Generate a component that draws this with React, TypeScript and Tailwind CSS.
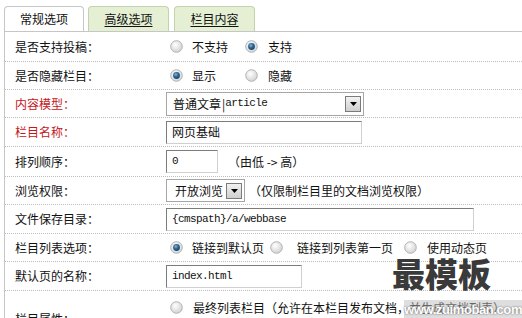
import React from 'react'

const cjk = { fontFamily: '"Noto Sans CJK SC", "Liberation Sans", sans-serif' }
const mono = { fontFamily: '"Liberation Mono", "Noto Sans CJK SC", monospace' }

function Radio({ checked = false }: { checked?: boolean }) {
  return (
    <svg width="13" height="13" viewBox="0 0 13 13" className="shrink-0">
      <defs>
        <radialGradient id={checked ? 'rc' : 'ru'} cx="0.4" cy="0.35" r="0.7">
          <stop offset="0" stopColor="#ffffff" />
          <stop offset="1" stopColor={checked ? '#c9d3db' : '#cfcfcf'} />
        </radialGradient>
        <radialGradient id="dot" cx="0.4" cy="0.35" r="0.7">
          <stop offset="0" stopColor="#8fb4d0" />
          <stop offset="0.5" stopColor="#2d6690" />
          <stop offset="1" stopColor="#173f5e" />
        </radialGradient>
      </defs>
      <circle cx="6.5" cy="6.5" r="5.8" fill={checked ? 'url(#rc)' : 'url(#ru)'} stroke="#b3b3b3" strokeWidth="1" />
      {checked && <circle cx="6.5" cy="6.5" r="3.4" fill="url(#dot)" />}
    </svg>
  )
}

function DropBtn() {
  return (
    <span className="w-[16px] h-[16px] border border-[#7b7b7b] bg-gradient-to-b from-[#f2f2f2] to-[#cfcfcf] flex items-center justify-center">
      <svg width="7" height="4" viewBox="0 0 7 4">
        <path d="M0 0 H7 L3.5 4 Z" fill="#000" />
      </svg>
    </span>
  )
}

function Row({ label, red, h, children }: { label: string, red?: boolean, h: string, children: React.ReactNode }) {
  return (
    <div className={`flex items-center border-b border-dotted border-[#bdbdbd] ${h}`}>
      <div className={`w-[161px] pl-[10px] text-[12px] ${red ? 'text-[#c4161c]' : 'text-[#111]'}`}>{label}</div>
      <div className="flex items-center text-[12px] text-[#111]">{children}</div>
    </div>
  )
}

const inputCls = 'h-[23px] border border-t-[#7c7c7c] border-l-[#7c7c7c] border-r-[#d0d0d0] border-b-[#d0d0d0] bg-white flex items-center pl-[5px]'

export default function App() {
  return (
    <div className="w-[522px] h-[318px] overflow-hidden bg-white relative" style={cjk}>
      {/* tabs */}
      <div className="flex items-end pl-[4px] pt-[7px] h-[31px]">
        <div className="w-[80px] h-[25px] border border-b-0 border-[#c6c6c6] rounded-t-[4px] bg-white flex items-center justify-center text-[12px] text-[#111]">常规选项</div>
        <div className="ml-[4px] w-[81px] h-[25px] border border-b-0 border-[#c3d3ad] rounded-t-[4px] bg-[#e4efd3] flex items-center justify-center text-[12px] text-[#111] underline underline-offset-2">高级选项</div>
        <div className="ml-[5px] w-[81px] h-[25px] border border-b-0 border-[#c3d3ad] rounded-t-[4px] bg-[#e4efd3] flex items-center justify-center text-[12px] text-[#111] underline underline-offset-2">栏目内容</div>
      </div>

      <div className="ml-[4px] border-l border-t border-[#c6c6c6]">
        <Row label="是否支持投稿：" h="h-[30px]">
          <span className="ml-[4px]"><Radio /></span>
          <span className="ml-[9px]">不支持</span>
          <span className="ml-[17px]"><Radio checked /></span>
          <span className="ml-[10px]">支持</span>
        </Row>
        <Row label="是否隐藏栏目：" h="h-[28px]">
          <span className="ml-[4px]"><Radio checked /></span>
          <span className="ml-[9px]">显示</span>
          <span className="ml-[29px]"><Radio /></span>
          <span className="ml-[10px]">隐藏</span>
        </Row>
        <Row label="内容模型：" red h="h-[28px]">
          <div className="w-[198px] h-[24px] border border-[#a6a6a6] flex items-center justify-between pl-[6px] pr-[2px]">
            <span className="flex items-center">
              普通文章<span className="ml-[1px]">|</span><span style={mono} className="text-[11px] tracking-[-0.6px]">article</span>
            </span>
            <DropBtn />
          </div>
        </Row>
        <Row label="栏目名称：" red h="h-[29px]">
          <div className={`${inputCls} w-[196px]`}>网页基础</div>
        </Row>
        <Row label="排列顺序：" h="h-[30px]">
          <div className={`${inputCls} w-[52px]`}>
            <span style={mono} className="text-[11px] tracking-[-0.6px]">0</span>
          </div>
          <span className="ml-[10px]">（由低 -&gt; 高）</span>
        </Row>
        <Row label="浏览权限：" h="h-[28px]">
          <div className="w-[79px] h-[23px] border border-[#a6a6a6] flex items-center justify-between pl-[8px] pr-[2px]">
            <span>开放浏览</span>
            <DropBtn />
          </div>
          <span className="ml-[4px]">（仅限制栏目里的文档浏览权限）</span>
        </Row>
        <Row label="文件保存目录：" h="h-[29px]">
          <div className={`${inputCls} w-[308px]`}>
            <span style={mono} className="text-[11px] tracking-[-0.6px]">{'{cmspath}/a/webbase'}</span>
          </div>
        </Row>
        <Row label="栏目列表选项：" h="h-[28px]">
          <span className="ml-[4px]"><Radio checked /></span>
          <span className="ml-[9px]">链接到默认页</span>
          <span className="ml-[6px]"><Radio /></span>
          <span className="ml-[14px]">链接到列表第一页</span>
          <span className="ml-[11px]"><Radio /></span>
          <span className="ml-[10px]">使用动态页</span>
        </Row>
        <Row label="默认页的名称：" h="h-[29px]">
          <div className={`${inputCls} w-[136px]`}>
            <span style={mono} className="text-[11px] tracking-[-0.6px]">index.html</span>
          </div>
        </Row>
        <div className="flex items-center h-[56px]">
          <div className="w-[161px] pl-[10px] text-[12px] text-[#111]">栏目属性：</div>
          <div className="flex flex-col gap-[5px] text-[12px] text-[#111]">
            <div className="flex items-center">
              <span className="ml-[4px]"><Radio /></span>
              <span className="ml-[10px]">最终列表栏目（允许在本栏目发布文档，并生成文档列表）</span>
            </div>
            <div className="flex items-center">
              <span className="ml-[4px]"><Radio /></span>
              <span className="ml-[10px]">频道封面（栏目本身不允许发布文档）</span>
            </div>
          </div>
        </div>
      </div>

      {/* watermark */}
      <div className="absolute left-[392px] top-[257px] text-[33px] leading-none font-black text-[#1e1e1e]/90" style={{ fontFamily: '"Noto Sans CJK SC", serif' }}>
        最模板
      </div>
      <div className="absolute left-[404px] top-[300px] w-[118px] h-[18px] bg-[#bdbdbd]/50 flex items-center text-[13px] font-bold text-white leading-none tracking-[-0.4px]" style={{ fontFamily: '"Liberation Sans", sans-serif', textShadow: '0 0 2px #555' }}>
        www.zuimoban.com
      </div>
    </div>
  )
}
